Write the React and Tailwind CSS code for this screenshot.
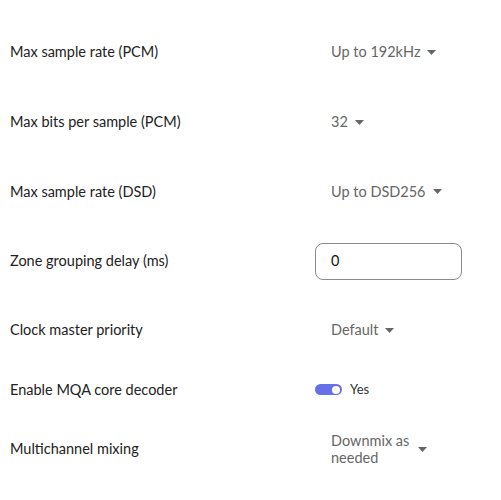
const Caret = () => (
    <svg width="9" height="5" viewBox="0 0 9 5" className="ml-[7px] shrink-0">
        <path d="M0 0 L9 0 L4.5 5 Z" fill="#666666" />
    </svg>
);

const Select = ({ value, wrap }) => (
    <div className="flex items-center pl-4 text-[#666666]">
        <span className={wrap ? "w-[80px] leading-[17px]" : ""}>{value}</span>
        <Caret />
    </div>
);

const Row = ({ label, h, children }) => (
    <div className={`flex items-center ${h}`}>
        <div className="w-[315px] pl-[10px] text-[#222222]">{label}</div>
        <div className="flex-1">{children}</div>
    </div>
);

export default function App() {
    return (
        <div className="w-[501px] h-[500px] bg-white pt-[17px] text-[14.5px]" style={{ fontFamily: "Lato, 'Noto Sans', sans-serif" }}>
            <Row label="Max sample rate (PCM)" h="h-[70px]">
                <Select value="Up to 192kHz" />
            </Row>
            <Row label="Max bits per sample (PCM)" h="h-[70px]">
                <Select value="32" />
            </Row>
            <Row label="Max sample rate (DSD)" h="h-[69px]">
                <Select value="Up to DSD256" />
            </Row>
            <Row label="Zone grouping delay (ms)" h="h-[70px]">
                <div className="flex items-center w-[147px] h-[37px] rounded-lg border border-[#8a8a8a] pl-[15px] text-[#111111]">
                    0
                </div>
            </Row>
            <Row label="Clock master priority" h="h-[68px]">
                <Select value="Default" />
            </Row>
            <Row label="Enable MQA core decoder" h="h-[51px]">
                <div className="flex items-center gap-2">
                    <div className="flex items-center justify-end w-[27px] h-[11px] rounded-full bg-[#6670e8] pr-[2px]">
                        <div className="w-[8px] h-[8px] rounded-full bg-white" />
                    </div>
                    <span className="text-[13px] text-[#333333]">Yes</span>
                </div>
            </Row>
            <Row label="Multichannel mixing" h="h-[68px]">
                <Select value="Downmix as needed" wrap />
            </Row>
        </div>
    );
}
